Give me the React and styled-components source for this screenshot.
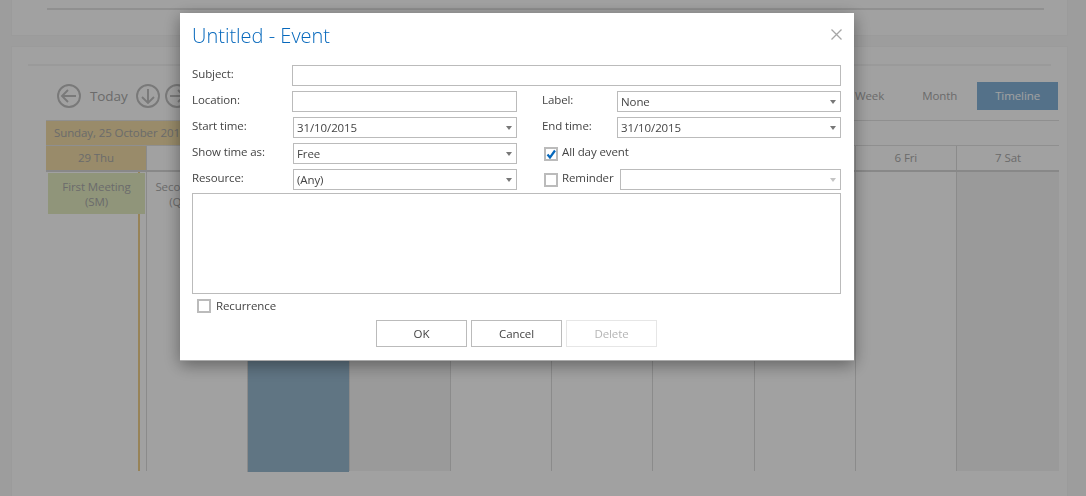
import React from 'react'
import styled, { createGlobalStyle } from 'styled-components'

const GlobalStyle = createGlobalStyle`
  html, body {
    margin: 0;
    height: 496px;
    overflow: hidden;
    background: #f9f9f9;
    font-family: 'Open Sans', 'Noto Sans', sans-serif;
    font-size: 11.5px;
    letter-spacing: -0.1px;
  }
  * { box-sizing: border-box; }
`

const dayColumns = '100px repeat(8, 101.25px) 1fr'

const Page = styled.div`
  height: 496px;
  padding: 0 18px 0 11px;
  overflow: hidden;
`
const TopPanel = styled.div`
  height: 36px;
  padding: 8px 23px 0 35px;
  background: #fff;
  border: 1px solid #f5f5f5;
  border-top: none;
`
const TopRule = styled.div`
  height: 2px;
  background: #e4e4e4;
`
const Panel = styled.div`
  height: 460px;
  margin-top: 10px;
  padding: 17px 8px 0 16px;
  background: #fff;
  border: 1px solid #f5f5f5;
  border-bottom: none;
`
const PanelRule = styled.div`
  height: 2px;
  margin-right: 8px;
  background: #f4f4f4;
`
const Toolbar = styled.div`
  display: flex;
  align-items: center;
  justify-content: space-between;
  height: 28px;
  margin: 16px 1px 10px 29px;
`
const NavGroup = styled.div`
  display: flex;
  align-items: center;
`
const NavIcon = styled.svg`
  width: 24px;
  height: 24px;
  margin-right: ${props => props.$gap}px;
  fill: none;
  stroke: #c0c0c0;
  stroke-width: 1.9;
`
const TodayLabel = styled.span`
  margin-right: 8px;
  font-size: 13.5px;
  color: #aaa;
`
const ViewGroup = styled.div`
  display: flex;
  gap: 2px;
`
const ViewButton = styled.div`
  height: 28px;
  padding: 0 18px;
  line-height: 28px;
  color: ${props => (props.$active ? '#fff' : '#aaa')};
  background: ${props => (props.$active ? '#86b4da' : 'transparent')};
`
const Scheduler = styled.div`
  margin-left: 18px;
  border-top: 1px solid #e2e2e2;
`
const DateRow = styled.div`
  height: 25px;
  border-bottom: 1px solid #e2e2e2;
`
const DateCell = styled.div`
  width: 202px;
  height: 24px;
  padding-left: 8px;
  line-height: 24px;
  white-space: nowrap;
  overflow: hidden;
  color: #aaa;
  background: #f2dda8;
`
const Days = styled.div`
  display: grid;
  grid-template-columns: ${dayColumns};
  height: 26px;
  border-bottom: 2px solid #d8d8d8;
`
const DayCell = styled.div`
  height: 24px;
  line-height: 24px;
  text-align: center;
  color: #aaa;
  background: ${props => (props.$today ? '#f2dda8' : 'transparent')};
  border-left: ${props => (props.$first ? 'none' : '1px solid #dcdcdc')};
`
const Body = styled.div`
  display: grid;
  grid-template-columns: ${dayColumns};
  height: 299px;
`
const Column = styled.div`
  position: relative;
  padding: 1px 1px 0 2px;
  border-left: ${props => (props.$first ? 'none' : '1px solid #dcdcdc')};
  background: ${props => {
    if (props.$kind === 'selected') return '#98b9d0'
    if (props.$kind === 'weekend') return '#f4f4f4'
    return 'transparent'
  }};
  margin-bottom: ${props => (props.$kind === 'selected' ? '-1px' : '0')};
`
const TodayLine = styled.div`
  position: absolute;
  top: 0;
  bottom: 0;
  left: 92px;
  width: 2px;
  background: #f0d08c;
`
const EventCard = styled.div`
  position: relative;
  height: 41px;
  padding-top: 6px;
  line-height: 15px;
  text-align: center;
  white-space: nowrap;
  color: #aaa;
  background: ${props => props.$color};
`
const Overlay = styled.div`
  position: fixed;
  inset: 0;
  background: rgba(0, 0, 0, 0.37);
`
const Modal = styled.div`
  position: fixed;
  top: 13px;
  left: 180px;
  width: 674px;
  height: 348px;
  padding: 0 13px 0 12px;
  color: #444;
  background: #fff;
  border-bottom: 1px solid #aaa;
  box-shadow: 0 4px 16px rgba(0, 0, 0, 0.4);
`
const ModalHeader = styled.div`
  display: flex;
  align-items: flex-start;
  justify-content: space-between;
  height: 52px;
`
const Title = styled.div`
  margin-top: 9px;
  font-size: 20px;
  font-weight: 300;
  letter-spacing: 0;
  line-height: 27px;
  color: #0668bc;
`
const CloseIcon = styled.svg`
  width: 11px;
  height: 11px;
  margin: 16px -1px 0 0;
  stroke: #a6a6a6;
  stroke-width: 1.3;
`
const Form = styled.div`
  display: grid;
  grid-template-columns: 100px 225px 25px 75px 224px;
  grid-auto-rows: 21px;
  row-gap: 5px;
`
const Label = styled.label`
  line-height: 18px;
  white-space: nowrap;
`
const TextBox = styled.input`
  display: block;
  grid-column: ${props => props.$span || 'auto'};
  width: 100%;
  height: 21px;
  padding: 0 4px;
  background: #fff;
  border: 1px solid #bbb;
  border-radius: 0;
  outline: none;
`
const Combo = styled.div`
  display: flex;
  align-items: center;
  justify-content: space-between;
  height: 21px;
  margin-left: ${props => props.$inset || 0}px;
  padding: 0 4px 0 3px;
  color: #444;
  border: 1px solid #bbb;
`
const Caret = styled.span`
  width: 0;
  height: 0;
  margin-top: 1px;
  border-left: 3.5px solid transparent;
  border-right: 3.5px solid transparent;
  border-top: 4px solid ${props => (props.$disabled ? '#c4c4c4' : '#777')};
`
const CheckRow = styled.div`
  display: flex;
  align-items: flex-start;
  gap: 4px;
  margin-left: ${props => props.$inset || 0}px;
`
const CheckField = styled.div`
  grid-column: 4 / 6;
  display: flex;
  align-items: flex-start;
`
const Box = styled.span`
  flex: none;
  width: 14px;
  height: 14px;
  margin-top: ${props => props.$top || 0}px;
  border: 2px solid #bbb;
  background: #fff;
`
const CheckMark = styled.svg`
  display: block;
  width: 10px;
  height: 10px;
  fill: none;
  stroke: #0668bc;
  stroke-width: 2.2;
`
const ReminderCombo = styled(Combo)`
  flex: 1;
  margin-left: 6px;
`
const Memo = styled.textarea`
  display: block;
  width: 100%;
  height: 101px;
  margin-top: 3px;
  resize: none;
  border: 1px solid #bbb;
  outline: none;
`
const RecurrenceRow = styled(CheckRow)`
  gap: 5px;
  height: 21px;
  margin-top: 5px;
  ${Label} {
    line-height: 14px;
  }
`
const Actions = styled.div`
  display: flex;
  justify-content: center;
  gap: 4px;
`
const ActionButton = styled.button`
  width: 91px;
  height: 27px;
  padding: 0;
  font: inherit;
  letter-spacing: inherit;
  color: ${props => (props.disabled ? '#b5b5b5' : '#444')};
  background: #fff;
  border: 1px solid ${props => (props.disabled ? '#e6e6e6' : '#bbb')};
`

const days = [
  { label: '29 Thu', today: true },
  { label: '30 Fri' },
  { label: '31 Sat', kind: 'selected' },
  { label: '1 Sun', kind: 'weekend' },
  { label: '2 Mon' },
  { label: '3 Tue' },
  { label: '4 Wed' },
  { label: '5 Thu' },
  { label: '6 Fri' },
  { label: '7 Sat', kind: 'weekend' },
]

const CircleArrow = ({ d, gap }) => (
  <NavIcon viewBox="0 0 24 24" $gap={gap}>
    <circle cx="12" cy="12" r="11" />
    <path d={d} />
  </NavIcon>
)

const Check = ({ checked, top }) => (
  <Box $top={top}>
    {checked && (
      <CheckMark viewBox="0 0 10 10">
        <path d="M1.5 5.5 L4 8.5 L9 1.5" />
      </CheckMark>
    )}
  </Box>
)

const App = () => {
  return (
    <>
      <GlobalStyle />
      <Page>
        <TopPanel>
          <TopRule />
        </TopPanel>
        <Panel>
          <PanelRule />
          <Toolbar>
            <NavGroup>
              <CircleArrow d="M19 12 H5 M11 6 L5 12 L11 18" gap={9} />
              <TodayLabel>Today</TodayLabel>
              <CircleArrow d="M12 5 V19 M6 13 L12 19 L18 13" gap={5} />
              <CircleArrow d="M5 12 H19 M13 6 L19 12 L13 18" gap={0} />
            </NavGroup>
            <ViewGroup>
              <ViewButton>Week</ViewButton>
              <ViewButton>Month</ViewButton>
              <ViewButton $active>Timeline</ViewButton>
            </ViewGroup>
          </Toolbar>
          <Scheduler>
            <DateRow>
              <DateCell>Sunday, 25 October 2015</DateCell>
            </DateRow>
            <Days>
              {days.map((day, i) => (
                <DayCell key={day.label} $today={day.today} $first={i === 0}>
                  {day.label}
                </DayCell>
              ))}
            </Days>
            <Body>
              {days.map((day, i) => (
                <Column key={day.label} $kind={day.kind} $first={i === 0}>
                  {i === 0 && <TodayLine />}
                  {i === 0 && (
                    <EventCard $color="#e4edc2">
                      First Meeting
                      <br />
                      (SM)
                    </EventCard>
                  )}
                  {i === 1 && (
                    <EventCard $color="transparent">
                      Second Meeting
                      <br />
                      (Quarterly)
                    </EventCard>
                  )}
                </Column>
              ))}
            </Body>
          </Scheduler>
        </Panel>
      </Page>
      <Overlay />
      <Modal>
        <ModalHeader>
          <Title>Untitled - Event</Title>
          <CloseIcon viewBox="0 0 11 11">
            <path d="M0.5 0.5 L10.5 10.5 M10.5 0.5 L0.5 10.5" />
          </CloseIcon>
        </ModalHeader>
        <Form>
          <Label>Subject:</Label>
          <TextBox $span="2 / 6" />

          <Label>Location:</Label>
          <TextBox />
          <span />
          <Label>Label:</Label>
          <Combo>
            None
            <Caret />
          </Combo>

          <Label>Start time:</Label>
          <Combo $inset={1}>
            31/10/2015
            <Caret />
          </Combo>
          <span />
          <Label>End time:</Label>
          <Combo>
            31/10/2015
            <Caret />
          </Combo>

          <Label>Show time as:</Label>
          <Combo $inset={1}>
            Free
            <Caret />
          </Combo>
          <span />
          <CheckField>
            <CheckRow $inset={2}>
              <Check checked top={4} />
              <Label>All day event</Label>
            </CheckRow>
          </CheckField>

          <Label>Resource:</Label>
          <Combo $inset={1}>
            (Any)
            <Caret />
          </Combo>
          <span />
          <CheckField>
            <CheckRow $inset={2}>
              <Check top={4} />
              <Label>Reminder</Label>
            </CheckRow>
            <ReminderCombo>
              <span />
              <Caret $disabled />
            </ReminderCombo>
          </CheckField>
        </Form>
        <Memo />
        <RecurrenceRow $inset={5}>
          <Check />
          <Label>Recurrence</Label>
        </RecurrenceRow>
        <Actions>
          <ActionButton>OK</ActionButton>
          <ActionButton>Cancel</ActionButton>
          <ActionButton disabled>Delete</ActionButton>
        </Actions>
      </Modal>
    </>
  )
}

export default App
